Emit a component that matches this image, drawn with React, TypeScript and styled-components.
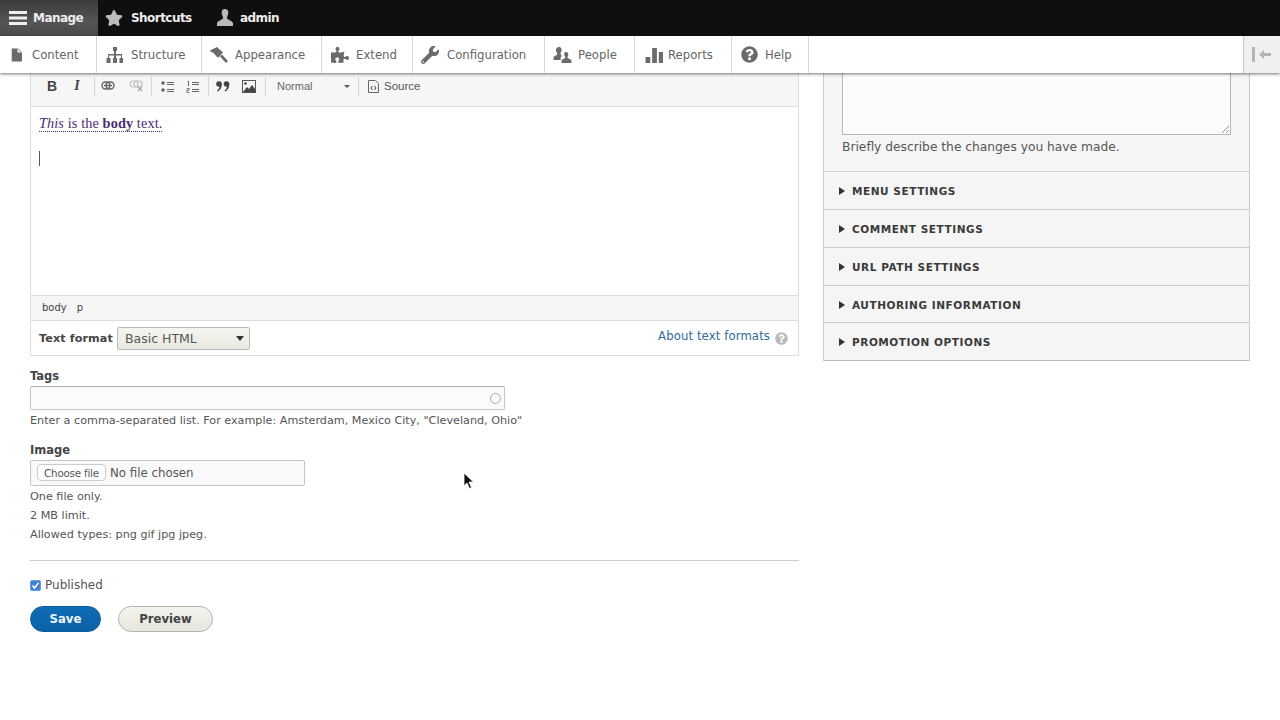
import React from "react";
import styled, { createGlobalStyle } from "styled-components";
import { FaPuzzlePiece, FaWrench, FaQuestionCircle, FaStar } from "react-icons/fa";

const Global = createGlobalStyle`
  html, body { margin: 0; padding: 0; background: #fff; }
  body { font-family: "DejaVu Sans", "Liberation Sans", sans-serif; color: #444; overflow: hidden; }
  * { box-sizing: border-box; }
`;

const Page = styled.div`width: 1280px; height: 720px; overflow: hidden; position: relative;`;
const TopBar = styled.div`height: 36px; background: #0f0f0f; display: flex; align-items: stretch;`;
const TopItem = styled.div<{ $active?: boolean; $w: number; $gap: number }>`
  width: ${p => p.$w}px; display: flex; align-items: center; gap: ${p => p.$gap}px; padding-left: 7px;
  color: #eee; font-size: 12px; font-weight: 700; letter-spacing: -0.55px;
  background: ${p => p.$active ? "linear-gradient(#3a3a3a, #555 60%, #4a4a4a)" : "transparent"};
`;
const Tray = styled.div`
  height: 37px; background: #fff; display: flex; position: relative; z-index: 2;
  box-shadow: 0 1px 3px rgba(0,0,0,.55);
`;
const TrayItem = styled.div<{ $w: number; $pad: number; $gap: number }>`
  width: ${p => p.$w}px; display: flex; align-items: center; gap: ${p => p.$gap}px; padding-left: ${p => p.$pad}px;
  border-right: 1px solid #d8d8d8; font-size: 11.7px; color: #666; white-space: nowrap;
`;
const TraySpacer = styled.div`flex: 1;`;
const Collapse = styled.div`
  width: 37px; background: #f0f0f0; border-left: 1px solid #c8c8c8;
  display: flex; align-items: center; justify-content: center; color: #b5b5b5;
`;
const Content = styled.div`display: grid; grid-template-columns: 769px 427px; column-gap: 24px; padding: 0 0 0 30px; align-items: start;`;
const Left = styled.div`display: flex; flex-direction: column;`;
const EditorToolbar = styled.div`
  height: 34px; background: #f6f6f6; border: 1px solid #ddd; border-top: 0;
  display: flex; align-items: center; padding: 0 0 7px 13px; color: #555;
`;
const ToolBtn = styled.div<{ $w: number }>`
  width: ${p => p.$w}px; display: flex; justify-content: center; align-items: center;
`;
const BoldB = styled.span`font: 700 14px "Liberation Sans", sans-serif; color: #444;`;
const ItalicI = styled.span`font: italic 700 14px "Liberation Serif", serif; color: #444;`;
const Sep = styled.div<{ $ml?: number }>`width: 1px; height: 19px; background: #d4d4d4; margin-left: ${p => p.$ml ?? 0}px;`;
const Combo = styled.div`
  width: 92px; display: flex; justify-content: space-between; align-items: center;
  padding: 0 8px 0 11px; font: 11px "Liberation Sans", sans-serif; color: #666;
`;
const Caret = styled.span`width: 0; height: 0; border: 3px solid transparent; border-top: 3px solid #555; border-bottom: 0;`;
const SourceLabel = styled.span`font: 11.5px "Liberation Sans", sans-serif; color: #555; margin-left: 5px;`;
const Source = styled.div`display: flex; align-items: center; margin-left: 9px;`;
const Body = styled.div`
  height: 188px; background: #fff; border-left: 1px solid #ddd; border-right: 1px solid #ddd;
  padding: 7px 8px; display: flex; flex-direction: column;
`;
const BodyText = styled.div`
  font: 14.3px/19px "Liberation Serif", serif; color: #4b2a73; align-self: flex-start;
  border-bottom: 1px dotted #4b2a73; height: 18px; letter-spacing: 0.1px;
`;
const Cursor = styled.div`width: 1px; height: 15px; background: #555; margin-top: 19px;`;
const PathBar = styled.div`
  height: 26px; background: #f5f5f5; border: 1px solid #ddd; padding: 0 0 2px 11px;
  display: flex; align-items: center; gap: 10px; font-size: 10px; color: #444;
`;
const FormatRow = styled.div`
  height: 35px; border: 1px solid #ddd; border-top: 0; display: flex; align-items: center;
  padding: 0 10px 0 8px; font-size: 11.2px;
`;
const FormatLabel = styled.span`font-weight: 700; color: #444; letter-spacing: .1px;`;
const SelectBox = styled.div`
  width: 133px; height: 23px; margin-left: 4px; border: 1px solid #bbb; border-radius: 2px;
  background: linear-gradient(#f6f6f0, #e8e8e0); display: flex; align-items: center;
  justify-content: space-between; padding: 0 5px 0 7px; color: #555; font-size: 12.5px;
`;
const SelectArrow = styled.span`width: 0; height: 0; border: 4px solid transparent; border-top: 5px solid #333; border-bottom: 0;`;
const FormatSpacer = styled.div`flex: 1;`;
const AboutLink = styled.span`color: #2f6a9b; font-size: 11.7px; margin: 0 5px 4px 0; letter-spacing: .1px;`;
const Field = styled.div<{ $top: number }>`margin-top: ${p => p.$top}px;`;
const Label = styled.div`font-size: 11.5px; font-weight: 600; color: #444; line-height: 14px; margin-bottom: 3px;`;
const TextInput = styled.div`
  width: 475px; height: 24px; border: 1px solid #c4c4c4; border-top-color: #aaa; border-radius: 2px; background: #fbfbfb;
  display: flex; align-items: center; justify-content: flex-end; padding-right: 3px;
`;
const Throbber = styled.span`width: 11px; height: 11px; border: 1.5px solid #aaa; border-radius: 50%;`;
const Desc = styled.div<{ $top?: number; $size?: number }>`font-size: ${p => p.$size ?? 11.2}px; color: #555; line-height: 14px; margin-top: ${p => p.$top ?? 0}px; white-space: nowrap;`;
const FileBox = styled.div`
  width: 275px; height: 26px; border: 1px solid #c4c4c4; border-radius: 2px; background: #f9f9f9;
  display: flex; align-items: center; padding: 0 0 1px 6px; gap: 4px; font-size: 11.8px; color: #555;
`;
const FileBtn = styled.div`
  width: 69px; height: 17px; border: 1px solid #ccc; border-radius: 4px; background: #fff;
  display: flex; align-items: center; justify-content: center; font: 10.3px "DejaVu Sans", sans-serif; letter-spacing: -.2px; color: #555;
`;
const Rule = styled.div`height: 1px; background: #ccc; margin-top: 18px;`;
const CheckRow = styled.div`display: flex; align-items: center; gap: 4px; margin-top: 17px; font-size: 12px; color: #555; height: 14px;`;
const Check = styled.div`
  width: 11px; height: 11px; background: #3f82d8; border-radius: 2px; border: 1px solid #6a9ddf;
  display: flex; align-items: center; justify-content: center;
`;
const Buttons = styled.div`display: flex; gap: 17px; margin-top: 14px;`;
const Btn = styled.div<{ $primary?: boolean; $w: number }>`
  width: ${p => p.$w}px; height: 26px; border-radius: 13px; display: flex; align-items: center; justify-content: center;
  font-size: 11.7px; font-weight: 700;
  color: ${p => p.$primary ? "#f2f6fa" : "#444"};
  background: ${p => p.$primary ? "linear-gradient(#0f6db6, #0b60a4)" : "linear-gradient(#f4f4ee, #e6e6de)"};
  border: 1px solid ${p => p.$primary ? "#0b5a99" : "#b5b5ad"};
`;
const Panel = styled.div`background: #f5f5f5; border: 1px solid #ccc; border-top: 0; border-bottom: 0;`;
const Upper = styled.div`padding: 0 18px 0 18px; height: 99px; border-bottom: 1px solid #d2d2d2;`;
const TextArea = styled.div`
  height: 62px; border: 1px solid #b8b8b8; border-top: 0; background: #fcfcfc; position: relative;
`;
const Grip = styled.svg`position: absolute; right: 0; bottom: 0;`;
const Row = styled.div<{ $last?: boolean; $h: number }>`
  height: ${p => p.$h}px; border-bottom: 1px solid ${p => p.$last ? "#bbb" : "#ccc"};
  display: flex; align-items: center; padding: 1px 0 0 15px; gap: 6px;
  font-size: 10.5px; letter-spacing: .55px; font-weight: 600; color: #3a3a3a; text-transform: uppercase;
`;
const Tri = styled.span`width: 0; height: 0; border: 4px solid transparent; border-left: 6px solid #333; border-right: 0; margin-right: 1px;`;
const Pointer = styled.svg`position: absolute; left: 463px; top: 472px; z-index: 3;`;

const G = "#6b6b6b";
const Ic = ({ w = 16, h = 16, vb = "0 0 16 16", c = G, children }: any) => (
  <svg width={w} height={h} viewBox={vb} fill={c} style={{ flex: "none" }}>{children}</svg>
);
const L = "#666";

type Nav = { t: string; w: number; pad: number; gap: number; icon: React.ReactNode };
const nav: Nav[] = [
  { t: "Content", w: 97, pad: 11, gap: 8, icon: <Ic w={13} h={16}><path d="M1 0h9l5 5v11H1z" transform="scale(.9 1)" /><path d="M9 0v5h5z" fill="#fff" transform="scale(.9 1)" /></Ic> },
  { t: "Structure", w: 105, pad: 8, gap: 8, icon: <Ic w={18}><path d="M7 0h4v4H10v3h6v4h1.500v5h-4v-5H15V8.500H10V11h1v5H7v-5h1V8.500H3V11h1.500v5h-4v-5H2V7h6V4H7z" /></Ic> },
  { t: "Appearance", w: 120, pad: 8, gap: 7, icon: <Ic w={18} h={16} vb="0 0 18 16"><path d="M0 3.500L7 0l1 1 5 4.500-1 1-3.500 4L7 10 3 5.500 1 5zM10 9.500l2-2 6 6.500-2 2z" /></Ic> },
  { t: "Extend", w: 91, pad: 9, gap: 7, icon: <FaPuzzlePiece size={18} color={G} /> },
  { t: "Configuration", w: 132, pad: 8, gap: 8, icon: <FaWrench size={18} color={G} /> },
  { t: "People", w: 90, pad: 8, gap: 6, icon: <Ic w={19} h={16} vb="0 0 18 16"><path d="M5.500 0c2 0 2.800 1.500 2.500 3.500-.2 1.300-1 2.200-1 3.200 0 .8 1 1 1 1.800V10h-.8v3H0v-2.500c0-1.500 3.700-1.800 3.700-3.500 0-1-1-2-1.200-3.500C2.200 1.500 3.500 0 5.500 0z" /><path d="M12.500 5c1.700 0 2.500 1.300 2.300 3-.1 1-.8 1.800-.8 2.600 0 1.300 4 1.300 4 3.400v2H8v-2c0-2 3.800-2.100 3.800-3.400 0-.8-.8-1.600-1-2.600C10.600 6.300 10.800 5 12.500 5z" /></Ic> },
  { t: "Reports", w: 97, pad: 9, gap: 5, icon: <Ic w={19}><path d="M0 10h5v6H0zM7 1h5v15H7zM14 5h5v11h-5z" transform="scale(.95 1)" /></Ic> },
  { t: "Help", w: 77, pad: 9, gap: 7, icon: <FaQuestionCircle size={17} color={G} /> },
];
const rows: [string, number][] = [["Menu settings", 38], ["Comment settings", 38], ["URL path settings", 38], ["Authoring information", 37], ["Promotion options", 38]];

export default function App() {
  return (
    <Page>
      <Global />
      <TopBar>
        <TopItem $active $w={98} $gap={6}>
          <Ic w={20} h={16} c="#eee"><path d="M0 1h19v3H0zM0 6.500h19v3H0zM0 12h19v3H0z" /></Ic>Manage
        </TopItem>
        <TopItem $w={110} $gap={8}><FaStar size={18} color="#bbb" />Shortcuts</TopItem>
        <TopItem $w={90} $gap={5}>
          <Ic w={20} h={18} vb="0 0 18 18" c="#bbb"><path d="M9 0c2.400 0 3.500 1.800 3.300 4-.2 2-1.300 3.500-1.300 5 0 2 6 2.500 6 5.500V17H1v-2.500C1 11.500 7 11 7 9c0-1.500-1.100-3-1.300-5C5.500 1.800 6.600 0 9 0z" /></Ic>admin
        </TopItem>
      </TopBar>
      <Tray>
        {nav.map(n => <TrayItem key={n.t} $w={n.w} $pad={n.pad} $gap={n.gap}>{n.icon}{n.t}</TrayItem>)}
        <TraySpacer />
        <Collapse>
          <Ic w={20} h={15} vb="0 0 20 15" c="#b5b5b5"><path d="M0 0h3v15H0zM7 7.500L12 3v3h7v3h-7v3z" /></Ic>
        </Collapse>
      </Tray>
      <Content>
        <Left>
          <EditorToolbar>
            <ToolBtn $w={16}><BoldB>B</BoldB></ToolBtn>
            <ToolBtn $w={34}><ItalicI>I</ItalicI></ToolBtn>
            <Sep />
            <ToolBtn $w={26}><Ic w={14} h={10} vb="0 0 14 10" c="none"><rect x="1" y="1" width="8" height="7" rx="3.500" stroke={L} strokeWidth="1.400" /><rect x="5" y="1" width="8" height="7" rx="3.500" stroke={L} strokeWidth="1.400" /><path d="M3 4.500h8" stroke={L} strokeWidth="1.400" /></Ic></ToolBtn>
            <ToolBtn $w={30}><Ic w={15} h={12} vb="0 0 15 12" c="none"><rect x="1" y="1" width="8" height="6" rx="3" stroke="#bbb" strokeWidth="1.200" /><rect x="5" y="1" width="8" height="6" rx="3" stroke="#bbb" strokeWidth="1.200" /><path d="M9 7l4 4m0-4l-4 4" stroke="#aaa" strokeWidth="1.200" /></Ic></ToolBtn>
            <Sep />
            <ToolBtn $w={30}><Ic w={13} h={13} vb="0 0 13 13" c={L}><circle cx="2" cy="3" r="1.800" /><circle cx="2" cy="10" r="1.800" /><path d="M6 2h7v1H6zM6 4h7v1H6zM6 9h7v1H6zM6 11h7v1H6z" /></Ic></ToolBtn>
            <ToolBtn $w={20}><Ic w={13} h={13} vb="0 0 13 13" c={L}><path d="M1.500 1H3v5H2V2H1.500zM0.500 8h3v2.500h-2V12h2v.8H.5v-3h2V8.800h-2zM6 2h7v1H6zM6 4h7v1H6zM6 9h7v1H6zM6 11h7v1H6z" /></Ic></ToolBtn>
            <Sep $ml={6} />
            <ToolBtn $w={28}><Ic w={14} h={11} vb="0 0 14 11" c="#444"><circle cx="3" cy="3" r="2.800" /><path d="M5.800 3C5.800 7 4 9.500 1.500 10.500L1 9.500C3 8.500 3.500 6 3.500 5z" /><circle cx="10.500" cy="3" r="2.800" /><path d="M13.300 3c0 4-1.800 6.500-4.300 7.500l-.5-1C10.500 8.500 11 6 11 5z" /></Ic></ToolBtn>
            <ToolBtn $w={24}><Ic w={14} h={13} vb="0 0 14 13" c="none"><rect x=".5" y=".5" width="13" height="12" fill="#f3f3f3" stroke="#555" /><circle cx="3.500" cy="3.500" r="1.300" fill="#444" /><path d="M1 12l4-5 2 2 3-4 3 4v3z" fill="#444" /></Ic></ToolBtn>
            <Sep $ml={4} />
            <Combo>Normal<Caret /></Combo>
            <Sep />
            <Source>
              <Ic w={11} h={13} vb="0 0 11 13" c="none"><path d="M.5.500h7l3 3v9H.5z" stroke="#666" /><path d="M4.500 6L3 8l1.500 2M6.500 6L8 8l-1.500 2" stroke="#444" /></Ic>
              <SourceLabel>Source</SourceLabel>
            </Source>
          </EditorToolbar>
          <Body>
            <BodyText><i>This</i> is the <b>body</b> text.</BodyText>
            <Cursor />
          </Body>
          <PathBar><span>body</span><span>p</span></PathBar>
          <FormatRow>
            <FormatLabel>Text format</FormatLabel>
            <SelectBox>Basic HTML<SelectArrow /></SelectBox>
            <FormatSpacer />
            <AboutLink>About text formats</AboutLink>
            <FaQuestionCircle size={13} color="#bbb" />
          </FormatRow>
          <Field $top={13}>
            <Label>Tags</Label>
            <TextInput><Throbber /></TextInput>
            <Desc $top={4}>Enter a comma-separated list. For example: Amsterdam, Mexico City, "Cleveland, Ohio"</Desc>
          </Field>
          <Field $top={15}>
            <Label>Image</Label>
            <FileBox><FileBtn>Choose file</FileBtn>No file chosen</FileBox>
            <Desc $top={4}>One file only.</Desc>
            <Desc $top={5}>2 MB limit.</Desc>
            <Desc $top={5}>Allowed types: png gif jpg jpeg.</Desc>
          </Field>
          <Rule />
          <CheckRow>
            <Check><Ic w={9} h={9} vb="0 0 9 9" c="none"><path d="M1.500 4.500L3.500 7l4-5" stroke="#fff" strokeWidth="1.500" /></Ic></Check>
            Published
          </CheckRow>
          <Buttons>
            <Btn $primary $w={71}>Save</Btn>
            <Btn $w={95}>Preview</Btn>
          </Buttons>
        </Left>
        <Panel>
          <Upper>
            <TextArea>
              <Grip width="10" height="10" viewBox="0 0 10 10" fill="none" stroke="#999"><path d="M2 9l7-7M6 9l3-3" /></Grip>
            </TextArea>
            <Desc $top={5} $size={12.25}>Briefly describe the changes you have made.</Desc>
          </Upper>
          {rows.map(([t, h], i) => <Row key={t} $h={h} $last={i === rows.length - 1}><Tri />{t}</Row>)}
        </Panel>
      </Content>
      <Pointer width="12" height="18" viewBox="0 0 12 18"><path d="M1 1v13l3-3 2.500 5.500 2-1L6 10h4.500z" fill="#111" stroke="#fff" strokeWidth=".8" /></Pointer>
    </Page>
  );
}
